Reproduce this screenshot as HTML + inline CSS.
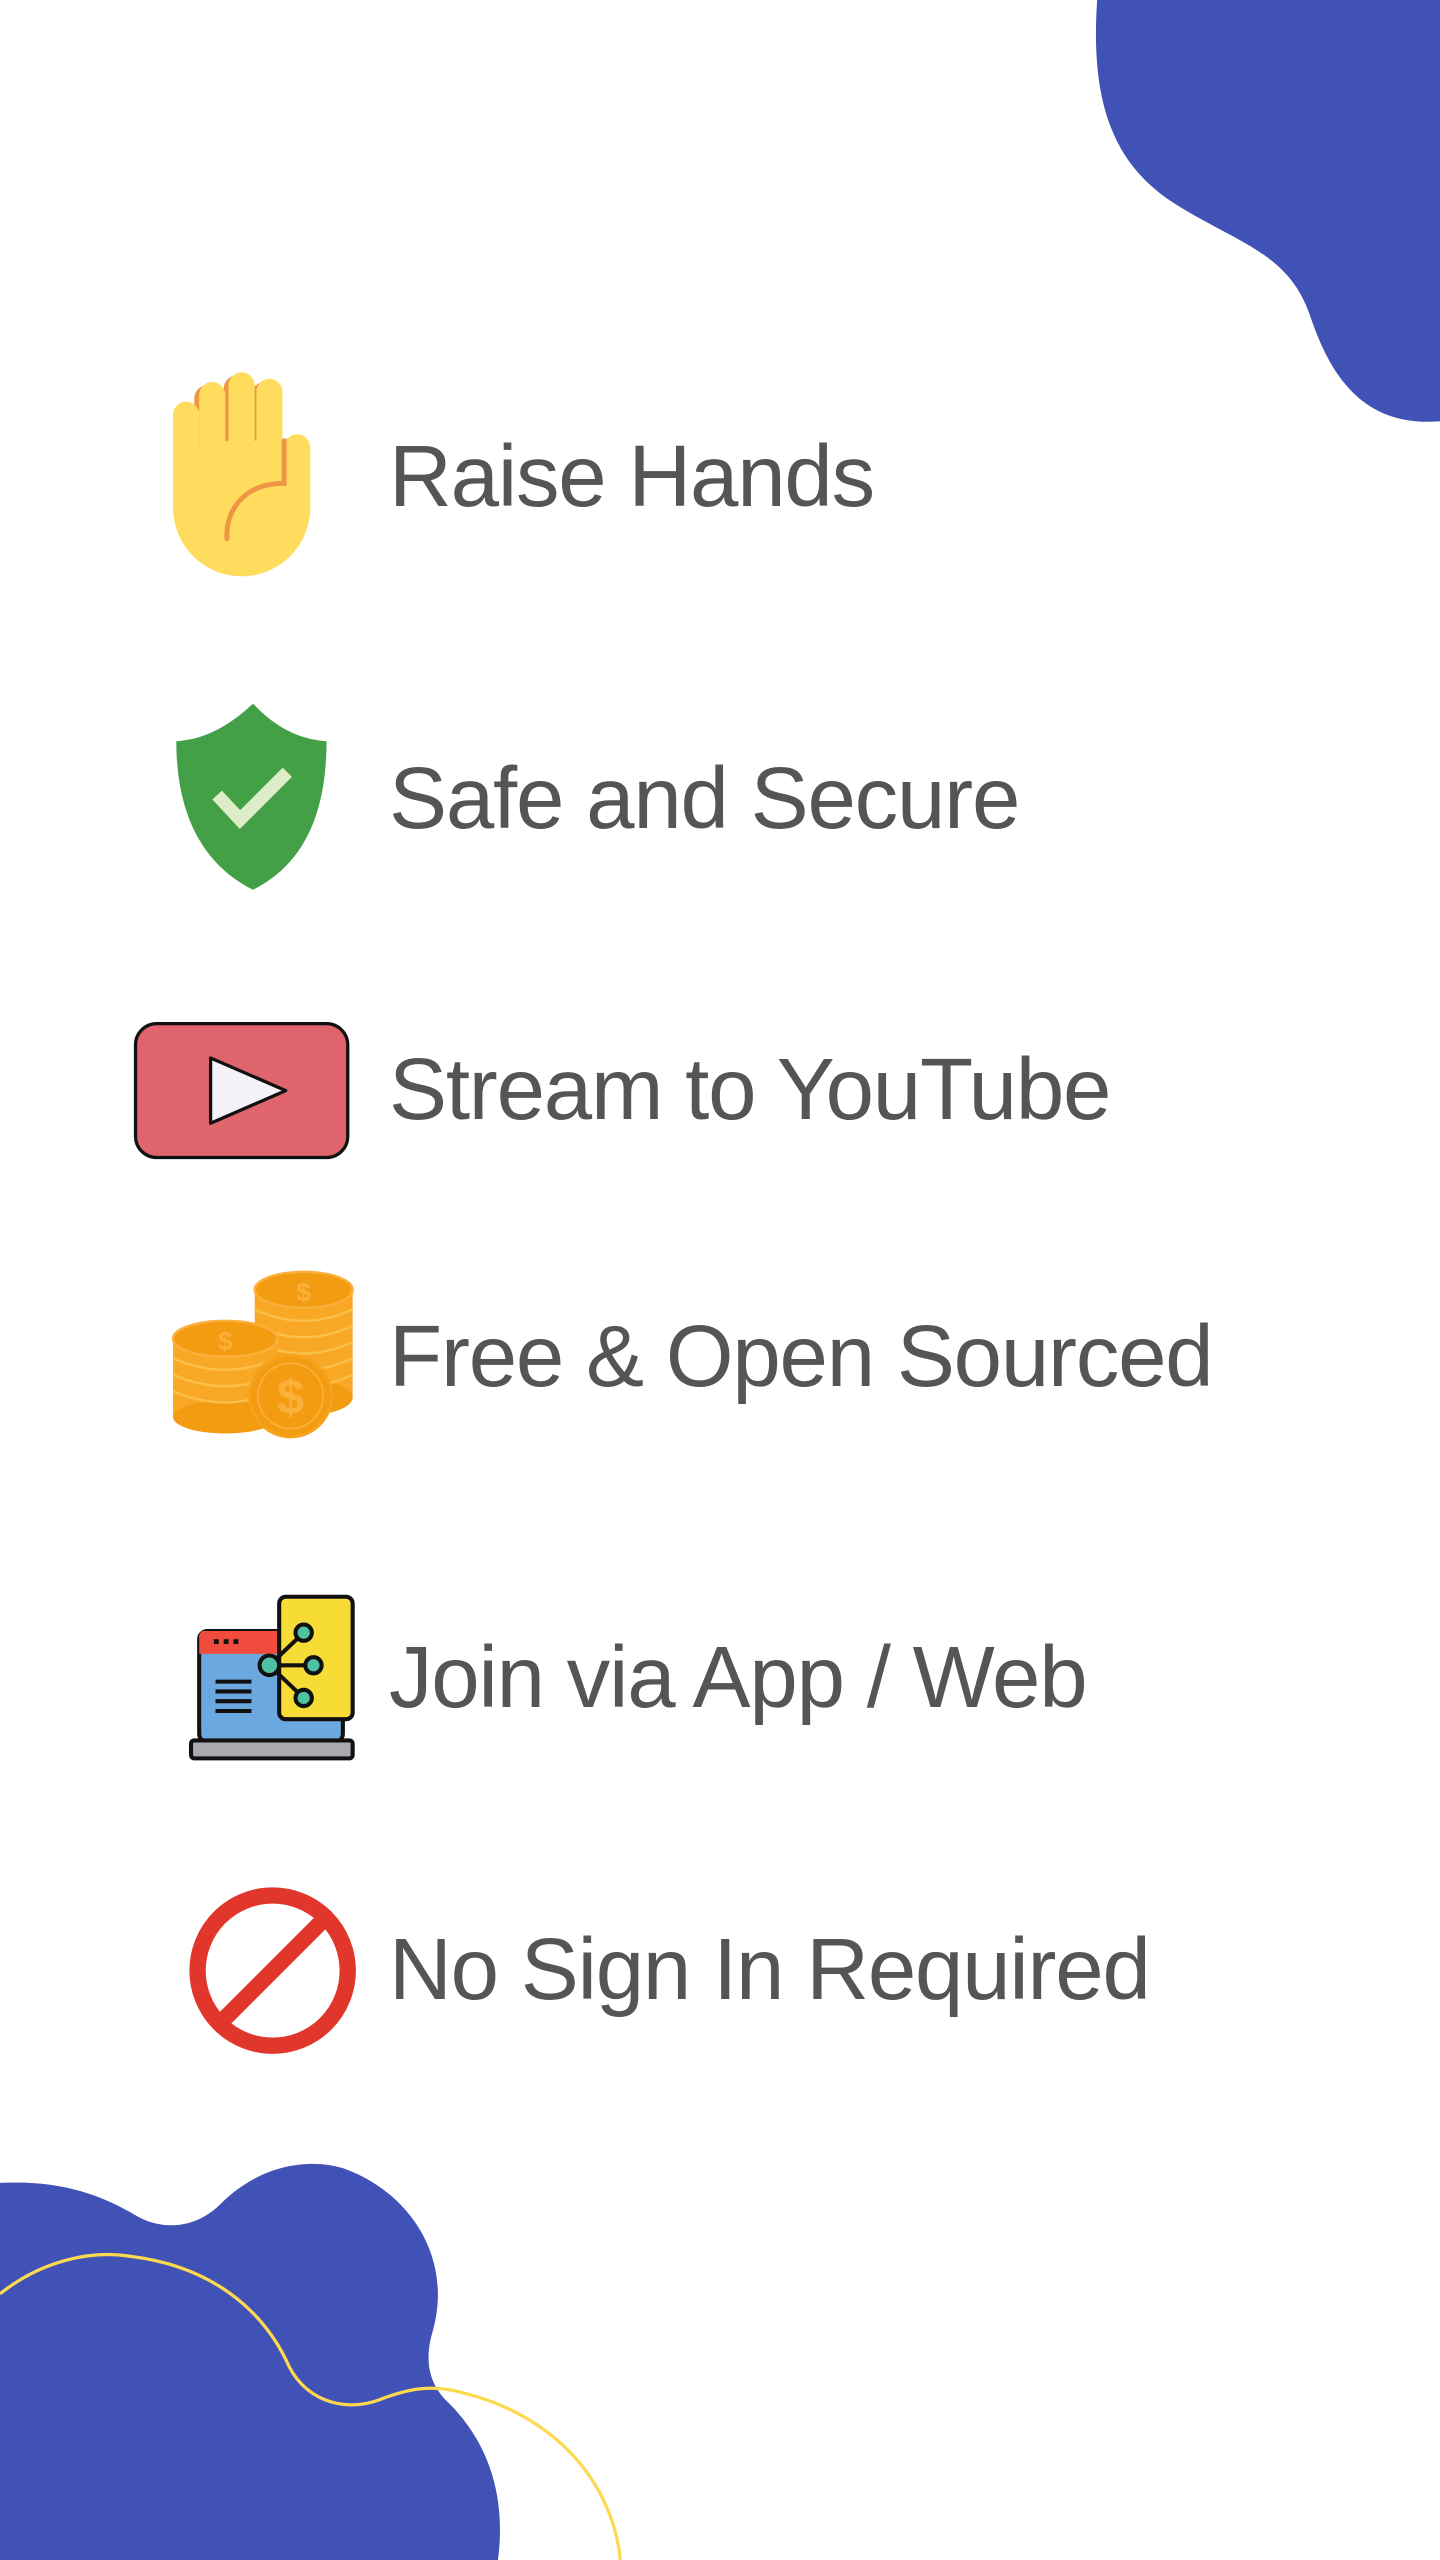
<!DOCTYPE html>
<html><head><meta charset="utf-8"><style>
html,body{margin:0;padding:0;background:#fff;width:1440px;height:2560px;overflow:hidden;position:relative}
svg{position:absolute;left:0;top:0}
.t{position:absolute;left:389px;font-family:"Liberation Sans",sans-serif;font-size:87px;color:#555;letter-spacing:-1.2px;line-height:1;white-space:nowrap}
</style></head><body>
<svg width="1440" height="2560" viewBox="0 0 882 1568" preserveAspectRatio="none">
<path d="M672,0 C668,60 680,100 720,125 C760,150 790,155 803,195 C815,230 835,262 882,258 L882,0 Z" fill="#4052b5"/>
<path d="M0,1337 C40,1335 65,1346 85,1358 C100,1366 120,1365 135,1350 C160,1325 190,1322 210,1328 C250,1342 278,1382 265,1428 C260,1445 262,1460 275,1472 C300,1497 310,1530 305,1568 L0,1568 Z" fill="#4052b5"/>
<path d="M0,1405 C25,1385 55,1378 80,1382 C130,1388 160,1415 175,1445 C185,1470 210,1478 232,1470 C250,1463 265,1460 285,1466 C340,1480 375,1520 380,1568" fill="none" stroke="#fdd94f" stroke-width="2"/>
<!-- hand -->
<g>
<rect x="119" y="236" width="16" height="80" rx="8" fill="#ef9645"/>
<rect x="137" y="230" width="17" height="80" rx="8" fill="#ef9645"/>
<rect x="154" y="234" width="17" height="80" rx="8" fill="#ef9645"/>
<rect x="171" y="268" width="17" height="40" rx="8" fill="#ef9645"/>
<rect x="106" y="246" width="16" height="70" rx="8" fill="#ffdc5d"/>
<rect x="122" y="234" width="16" height="80" rx="8" fill="#ffdc5d"/>
<rect x="140" y="228" width="16" height="80" rx="8" fill="#ffdc5d"/>
<rect x="157" y="232" width="16" height="80" rx="8" fill="#ffdc5d"/>
<rect x="174" y="266" width="16" height="50" rx="8" fill="#ffdc5d"/>
<rect x="106" y="284" width="84" height="30" fill="#ffdc5d"/>
<ellipse cx="148" cy="311" rx="42" ry="42" fill="#ffdc5d"/>
<path d="M174,270 L174,296 C150,296 138,312 139,330" fill="none" stroke="#ef9645" stroke-width="3" stroke-linecap="round"/>
</g>
<!-- shield -->
<path d="M155,431 C140,445 125,453 108,454 C108,500 125,530 155,545 C185,530 200,500 200,454 C183,453 168,445 155,431 Z" fill="#43a047"/>
<polyline points="133,487 147,502 176,473" fill="none" stroke="#dcedc8" stroke-width="8"/>
<!-- youtube -->
<rect x="83" y="627" width="130" height="82" rx="13" fill="#e0646c" stroke="#111" stroke-width="2"/>
<path d="M129,648 L175,668 L129,688 Z" fill="#f5f3f8" stroke="#111" stroke-width="2" stroke-linejoin="round"/>
<!-- coins -->
<g>
<rect x="156" y="790" width="60" height="66" fill="#f9a825"/>
<ellipse cx="186" cy="856" rx="30" ry="11" fill="#f39c12"/>
<g fill="none" stroke="#fbc04a" stroke-width="1.5"><path d="M156,802 q30,14 60,0 M156,812 q30,14 60,0 M156,822 q30,14 60,0 M156,832 q30,14 60,0 M156,842 q30,14 60,0"/></g>
<ellipse cx="186" cy="790" rx="30" ry="11" fill="#f39c12" stroke="#fbb03b" stroke-width="1.5"/>
<text x="186" y="797" font-family="Liberation Sans,sans-serif" font-size="16" font-weight="bold" fill="#fbb03b" text-anchor="middle">$</text>
<rect x="106" y="820" width="64" height="48" fill="#f9a825"/>
<ellipse cx="138" cy="868" rx="32" ry="10" fill="#f39c12"/>
<g fill="none" stroke="#fbc04a" stroke-width="1.5"><path d="M106,832 q32,14 64,0 M106,842 q32,14 64,0 M106,852 q32,14 64,0"/></g>
<ellipse cx="138" cy="820" rx="32" ry="11" fill="#f39c12" stroke="#fbb03b" stroke-width="1.5"/>
<text x="138" y="827" font-family="Liberation Sans,sans-serif" font-size="16" font-weight="bold" fill="#fbb03b" text-anchor="middle">$</text>
<circle cx="178" cy="855" r="25" fill="#f39c12" stroke="#f7a21b" stroke-width="2"/>
<circle cx="178" cy="855" r="20" fill="none" stroke="#fbb03b" stroke-width="1"/>
<text x="178" y="866" font-family="Liberation Sans,sans-serif" font-size="30" font-weight="bold" fill="#fbb03b" text-anchor="middle">$</text>
</g>
<!-- app -->
<g stroke="#111" stroke-width="2.5">
<rect x="122" y="999" width="88" height="68" rx="5" fill="#6aa8df"/>
<path d="M124,999 h46 v14 h-48 v-9 a5,5 0 0 1 2,-5z" fill="#f04c3e" stroke="none"/>
<rect x="117" y="1066" width="99" height="11" rx="2" fill="#a9a9b0"/>
<rect x="171" y="978" width="45" height="75" rx="4" fill="#f7dc35"/>
<line x1="165" y1="1020" x2="186" y2="1000"/><line x1="165" y1="1020" x2="192" y2="1020"/><line x1="165" y1="1020" x2="186" y2="1040"/>
<circle cx="165" cy="1020" r="6" fill="#4fc3a1"/>
<circle cx="186" cy="1000" r="5" fill="#4fc3a1"/>
<circle cx="192" cy="1020" r="5" fill="#4fc3a1"/>
<circle cx="186" cy="1040" r="5" fill="#4fc3a1"/>
<line x1="132" y1="1030" x2="154" y2="1030"/><line x1="132" y1="1036" x2="154" y2="1036"/><line x1="132" y1="1042" x2="154" y2="1042"/><line x1="132" y1="1048" x2="154" y2="1048"/>
</g>
<g fill="#111"><rect x="131" y="1004" width="3" height="3"/><rect x="137" y="1004" width="3" height="3"/><rect x="143" y="1004" width="3" height="3"/></g>
<!-- no sign -->
<circle cx="167" cy="1207" r="46" fill="none" stroke="#e0362c" stroke-width="10"/>
<line x1="200" y1="1174" x2="134" y2="1240" stroke="#e0362c" stroke-width="10"/>
</svg>
<div class="t" style="top:433px">Raise Hands</div>
<div class="t" style="top:755px">Safe and Secure</div>
<div class="t" style="top:1046px">Stream to YouTube</div>
<div class="t" style="top:1313px">Free &amp; Open Sourced</div>
<div class="t" style="top:1634px">Join via App / Web</div>
<div class="t" style="top:1926px">No Sign In Required</div>
</body></html>
